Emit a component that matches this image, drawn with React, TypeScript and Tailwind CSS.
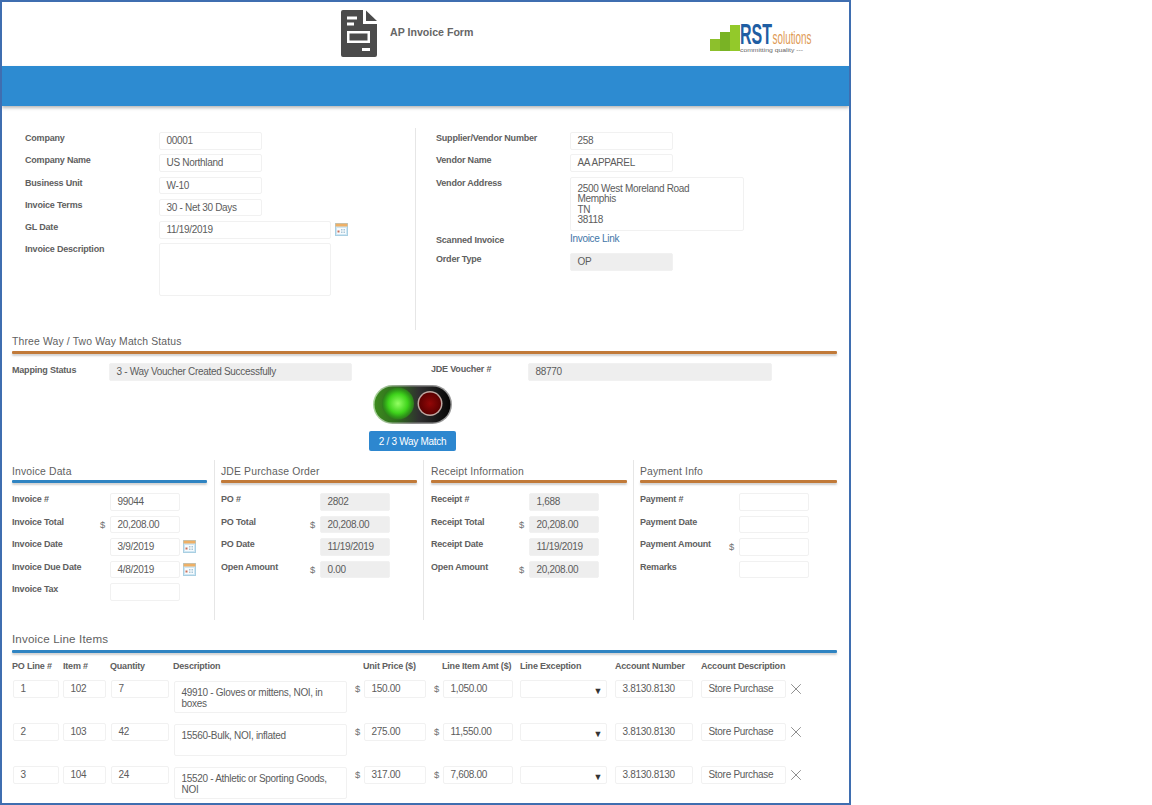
import React from "react";
import { X } from "lucide-react";

const FONT = "font-['Liberation_Sans',Arial,sans-serif]";

function Box({ w, h = "h-[17.5px]", grey = false, children }: { w: string; h?: string; grey?: boolean; children?: React.ReactNode }) {
  return (
    <div className={`${w} ${h} shrink-0 rounded-[2px] border border-[#f1f1f1] ${grey ? "bg-[#eeeeee]" : "bg-white"} pl-[6.5px] text-[10px] leading-[16px] tracking-[-0.3px] text-[#5c5c5c]`}>
      {children}
    </div>
  );
}

function Calendar({ className = "" }: { className?: string }) {
  return (
    <svg viewBox="0 0 13 13" className={`h-[13px] w-[13px] shrink-0 ${className}`}>
      <rect x="0.5" y="0.5" width="12" height="12" fill="#cfe6f3" stroke="#a9cfe2" />
      <rect x="0.5" y="0.5" width="12" height="3" fill="#eeb066" />
      <rect x="2" y="5" width="9" height="6" fill="#f7fbfd" />
      <rect x="2.5" y="7.5" width="2" height="2" fill="#c9705a" />
      <rect x="6" y="6" width="1.5" height="1.5" fill="#a9c6d8" />
      <rect x="8.5" y="6" width="1.5" height="1.5" fill="#a9c6d8" />
      <rect x="6" y="8.5" width="1.5" height="1.5" fill="#a9c6d8" />
      <rect x="8.5" y="8.5" width="1.5" height="1.5" fill="#a9c6d8" />
    </svg>
  );
}

function Label({ className, children }: { className: string; children: React.ReactNode }) {
  return <div className={`${className} shrink-0 whitespace-nowrap text-[9px] font-bold leading-[12px] tracking-[-0.2px] text-[#606060]`}>{children}</div>;
}

function TopRow({ label, children }: { label: string; children: React.ReactNode }) {
  return (
    <div className="flex items-start">
      <Label className="w-[134px]">{label}</Label>
      {children}
    </div>
  );
}

function Rule({ blue = false }: { blue?: boolean }) {
  return <div className={`h-[3px] rounded-[1px] ${blue ? "bg-[#2f84c2]" : "bg-[#c17a39]"} shadow-[0_2px_2px_rgba(120,120,120,0.35)]`} />;
}

function Heading({ children, large = false }: { children: React.ReactNode; large?: boolean }) {
  return <div className={`h-[14px] ${large ? "text-[11.6px]" : "text-[10.4px]"} leading-[14px] tracking-[0.15px] text-[#5f5f5f]`}>{children}</div>;
}

type Row = { label: string; value?: string; dollar?: boolean; cal?: boolean };

function DataColumn({ title, rows, grey = false, blue = false, labelW, cls }: { title: string; rows: Row[]; grey?: boolean; blue?: boolean; labelW: string; cls: string }) {
  return (
    <div className={`${cls} h-[160px] shrink-0 pt-[5px]`}>
      <Heading>{title}</Heading>
      <div className="mt-[1px]">
        <Rule blue={blue} />
      </div>
      <div className="mt-[10px] flex flex-col gap-[5px]">
        {rows.map((r) => (
          <div key={r.label} className="flex items-start">
            <Label className={labelW}>{r.label}</Label>
            <div className="mt-[3px] w-[10px] shrink-0 text-[9.4px] leading-[12px] text-[#707070]">{r.dollar ? "$" : ""}</div>
            <Box w="w-[70px]" grey={grey}>{r.value}</Box>
            {r.cal && <Calendar className="ml-[3px] mt-[2px]" />}
          </div>
        ))}
      </div>
    </div>
  );
}

const COLS = "grid grid-cols-[50px_48px_63px_181px_79px_86px_95px_86px_96px_40px]";

const lines = [
  { po: "1", item: "102", qty: "7", desc: "49910 - Gloves or mittens, NOI, in boxes", price: "150.00", amt: "1,050.00" },
  { po: "2", item: "103", qty: "42", desc: "15560-Bulk, NOI, inflated", price: "275.00", amt: "11,550.00" },
  { po: "3", item: "104", qty: "24", desc: "15520 - Athletic or Sporting Goods, NOI", price: "317.00", amt: "7,608.00" },
];

function Head({ children, className = "" }: { children: React.ReactNode; className?: string }) {
  return <div className={`whitespace-nowrap text-[9px] font-bold leading-[12px] tracking-[-0.2px] text-[#606060] ${className}`}>{children}</div>;
}

export default function App() {
  return (
    <div className={`${FONT} h-[805px] w-[851px] overflow-hidden border-2 border-[#3f6eb0] bg-white`}>
      {/* header */}
      <div className="flex h-[64px] items-start pt-[8px]">
        <svg viewBox="0 0 36 47" className="ml-[339px] h-[47px] w-[36px] shrink-0">
          <path d="M2 0H22V14H36V45a2 2 0 0 1-2 2H2a2 2 0 0 1-2-2V2a2 2 0 0 1 2-2Z" fill="#4b4b4b" />
          <path d="M25 0.5L36 11H25Z" fill="#4b4b4b" />
          <rect x="6" y="6.5" width="10" height="3" fill="#fff" />
          <rect x="6" y="12.5" width="7" height="3" fill="#fff" />
          <path fillRule="evenodd" d="M6 21H29V33H6ZM8.5 23.5V30.5H26.5V23.5Z" fill="#fff" />
          <rect x="21" y="38" width="8" height="3" fill="#fff" />
        </svg>
        <div className="ml-[13px] mt-[15px] text-[10.6px] font-bold leading-[14px] text-[#666]">AP Invoice Form</div>
        <svg viewBox="0 -6 104 38" className="ml-auto mr-[35px] mt-[6px] h-[38px] w-[104px] shrink-0">
          <rect x="0" y="17" width="11" height="12" fill="#8dc02c" />
          <rect x="10" y="10" width="11" height="19" fill="#79b325" />
          <rect x="20" y="3" width="10" height="26" fill="#93c92a" />
          <text x="30" y="22" textLength="32" lengthAdjust="spacingAndGlyphs" fontFamily="Liberation Sans" fontWeight="700" fontSize="29" fill="#1f5ea3">RST</text>
          <text x="62.5" y="22" textLength="39" lengthAdjust="spacingAndGlyphs" fontFamily="Liberation Sans" fontSize="18" fill="#e09a54">solutions</text>
          <text x="30" y="29.5" textLength="63" lengthAdjust="spacingAndGlyphs" fontFamily="Liberation Sans" fontSize="6" fill="#666">committing quality ---</text>
        </svg>
      </div>

      {/* blue bar */}
      <div className="h-[40px] bg-[#2d8bd1] shadow-[0_2px_3px_rgba(100,100,100,0.45)]" />

      {/* top form */}
      <div className="mt-[22px] flex h-[202px]">
        <div className="w-[414px] shrink-0 border-r border-[#e6e6e6] pl-[23px] pt-[4px]">
          <div className="flex flex-col gap-[4.75px]">
            <TopRow label="Company"><Box w="w-[103px]">00001</Box></TopRow>
            <TopRow label="Company Name"><Box w="w-[103px]">US Northland</Box></TopRow>
            <TopRow label="Business Unit"><Box w="w-[103px]">W-10</Box></TopRow>
            <TopRow label="Invoice Terms"><Box w="w-[103px]">30 - Net 30 Days</Box></TopRow>
            <TopRow label="GL Date">
              <Box w="w-[172px]">11/19/2019</Box>
              <Calendar className="ml-[4px] mt-[2px]" />
            </TopRow>
            <TopRow label="Invoice Description"><Box w="w-[172px]" h="h-[53px]" /></TopRow>
          </div>
        </div>
        <div className="pl-[20px] pt-[4px]">
          <div className="flex flex-col gap-[4.75px]">
            <TopRow label="Supplier/Vendor Number"><Box w="w-[103px]">258</Box></TopRow>
            <TopRow label="Vendor Name"><Box w="w-[103px]">AA APPAREL</Box></TopRow>
            <TopRow label="Vendor Address">
              <Box w="w-[174px]" h="h-[54px]">
                <div className="pt-[6px] leading-[10.5px]">
                  2500 West Moreland Road<br />Memphis<br />TN<br />38118
                </div>
              </Box>
            </TopRow>
            <div className="-mt-[3px] flex items-start">
              <Label className="w-[134px] pt-[2px]">Scanned Invoice</Label>
              <div className="text-[10px] leading-[14px] tracking-[-0.3px] text-[#3f76a8]">Invoice Link</div>
            </div>
            <div className="mt-[2px]">
              <TopRow label="Order Type"><Box w="w-[103px]" grey>OP</Box></TopRow>
            </div>
          </div>
        </div>
      </div>

      {/* match status */}
      <div className="ml-[10px] w-[825px]">
        <div className="mt-[5px]">
          <Heading>Three Way / Two Way Match Status</Heading>
        </div>
        <div className="mt-[2px]">
          <Rule />
        </div>
        <div className="mt-[9px] flex items-start">
          <Label className="w-[97px] pt-[1px]">Mapping Status</Label>
          <Box w="w-[243px]" grey>3 - Way Voucher Created Successfully</Box>
          <Label className="ml-[79px] w-[97px]">JDE Voucher #</Label>
          <Box w="w-[244px]" grey>88770</Box>
        </div>
        <div className="mt-[4.5px] flex w-[801px] flex-col items-center">
          <svg viewBox="0 0 79 39" className="h-[39px] w-[79px]">
            <defs>
              <linearGradient id="pill" x1="0" x2="1" y1="0" y2="0">
                <stop offset="0" stopColor="#3c8a1e" />
                <stop offset="0.3" stopColor="#2f6a1e" />
                <stop offset="0.58" stopColor="#303030" />
                <stop offset="1" stopColor="#050505" />
              </linearGradient>
              <linearGradient id="rim" x1="0" x2="1" y1="0" y2="0">
                <stop offset="0" stopColor="#a9d79a" />
                <stop offset="0.5" stopColor="#8a8a8a" />
                <stop offset="1" stopColor="#9a9a9a" />
              </linearGradient>
              <radialGradient id="green">
                <stop offset="0" stopColor="#93ff63" />
                <stop offset="0.6" stopColor="#3fd41c" />
                <stop offset="0.85" stopColor="#2f9a18" />
                <stop offset="1" stopColor="#2f7a1c" />
              </radialGradient>
              <radialGradient id="red">
                <stop offset="0" stopColor="#930707" />
                <stop offset="1" stopColor="#5c0000" />
              </radialGradient>
            </defs>
            <rect x="0" y="0" width="79" height="39" rx="19.5" fill="url(#rim)" />
            <rect x="1.5" y="1.5" width="76" height="36" rx="18" fill="url(#pill)" />
            <circle cx="25" cy="18.5" r="16" fill="url(#green)" />
            <circle cx="57" cy="18.5" r="12.5" fill="#c0a8a2" />
            <circle cx="57" cy="18.5" r="11" fill="url(#red)" />
          </svg>
          <div className="mt-[7px] flex h-[20px] w-[87px] items-center justify-center rounded-[2px] bg-[#2d87cf] text-[10px] tracking-[-0.3px] text-white">2 / 3 Way Match</div>
        </div>

        {/* four columns */}
        <div className="mt-[9px] flex">
          <DataColumn
            title="Invoice Data"
            blue
            labelW="w-[88px]"
            cls="w-[203px] border-r border-[#e6e6e6] pr-[7px]"
            rows={[
              { label: "Invoice #", value: "99044" },
              { label: "Invoice Total", value: "20,208.00", dollar: true },
              { label: "Invoice Date", value: "3/9/2019", cal: true },
              { label: "Invoice Due Date", value: "4/8/2019", cal: true },
              { label: "Invoice Tax" },
            ]}
          />
          <DataColumn
            title="JDE Purchase Order"
            grey
            labelW="w-[89px]"
            cls="w-[209px] border-r border-[#e6e6e6] pl-[6px] pr-[6px]"
            rows={[
              { label: "PO #", value: "2802" },
              { label: "PO Total", value: "20,208.00", dollar: true },
              { label: "PO Date", value: "11/19/2019" },
              { label: "Open Amount", value: "0.00", dollar: true },
            ]}
          />
          <DataColumn
            title="Receipt Information"
            grey
            labelW="w-[88px]"
            cls="w-[210px] border-r border-[#e6e6e6] pl-[7px] pr-[6px]"
            rows={[
              { label: "Receipt #", value: "1,688" },
              { label: "Receipt Total", value: "20,208.00", dollar: true },
              { label: "Receipt Date", value: "11/19/2019" },
              { label: "Open Amount", value: "20,208.00", dollar: true },
            ]}
          />
          <DataColumn
            title="Payment Info"
            labelW="w-[89px]"
            cls="w-[203px] pl-[6px]"
            rows={[
              { label: "Payment #" },
              { label: "Payment Date" },
              { label: "Payment Amount", dollar: true },
              { label: "Remarks" },
            ]}
          />
        </div>

        {/* line items */}
        <div className="mt-[12px]">
          <Heading large>Invoice Line Items</Heading>
        </div>
        <div className="mt-[4px]">
          <Rule blue />
        </div>
        <div className={`${COLS} mt-[7px]`}>
          <Head>PO Line #</Head>
          <Head className="pl-[1px]">Item #</Head>
          <Head>Quantity</Head>
          <Head>Description</Head>
          <Head className="pl-[9px]">Unit Price ($)</Head>
          <Head className="pl-[9px]">Line Item Amt ($)</Head>
          <Head className="pl-[1px]">Line Exception</Head>
          <Head className="pl-[1px]">Account Number</Head>
          <Head className="pl-[1px]">Account Description</Head>
          <div />
        </div>
        <div className={`${COLS} ml-[1px] mt-[8px] gap-y-[10px]`}>
          {lines.map((l) => (
            <React.Fragment key={l.po}>
              <Box w="w-[46px]">{l.po}</Box>
              <Box w="w-[43px]">{l.item}</Box>
              <Box w="w-[58px]">{l.qty}</Box>
              <div className="mt-[1px]">
                <Box w="w-[173px]" h="h-[32px]">
                  <div className="pr-[14px] pt-[6px] leading-[10.5px]">{l.desc}</div>
                </Box>
              </div>
              <div className="flex items-start">
                <div className="mt-[3px] w-[9px] shrink-0 text-[9.4px] leading-[12px] text-[#707070]">$</div>
                <Box w="w-[62px]">{l.price}</Box>
              </div>
              <div className="flex items-start">
                <div className="mt-[3px] w-[9px] shrink-0 text-[9.4px] leading-[12px] text-[#707070]">$</div>
                <Box w="w-[70px]">{l.amt}</Box>
              </div>
              <Box w="w-[87px]" h="h-[18px]">
                <div className="pr-[4px] pt-[1px] text-right text-[9px] leading-[18px] text-[#333]">▼</div>
              </Box>
              <Box w="w-[78px]">3.8130.8130</Box>
              <Box w="w-[85px]">Store Purchase</Box>
              <div className="-ml-[10px]">
                <X size={18} strokeWidth={1.1} className="text-[#777]" />
              </div>
            </React.Fragment>
          ))}
        </div>
      </div>
    </div>
  );
}
